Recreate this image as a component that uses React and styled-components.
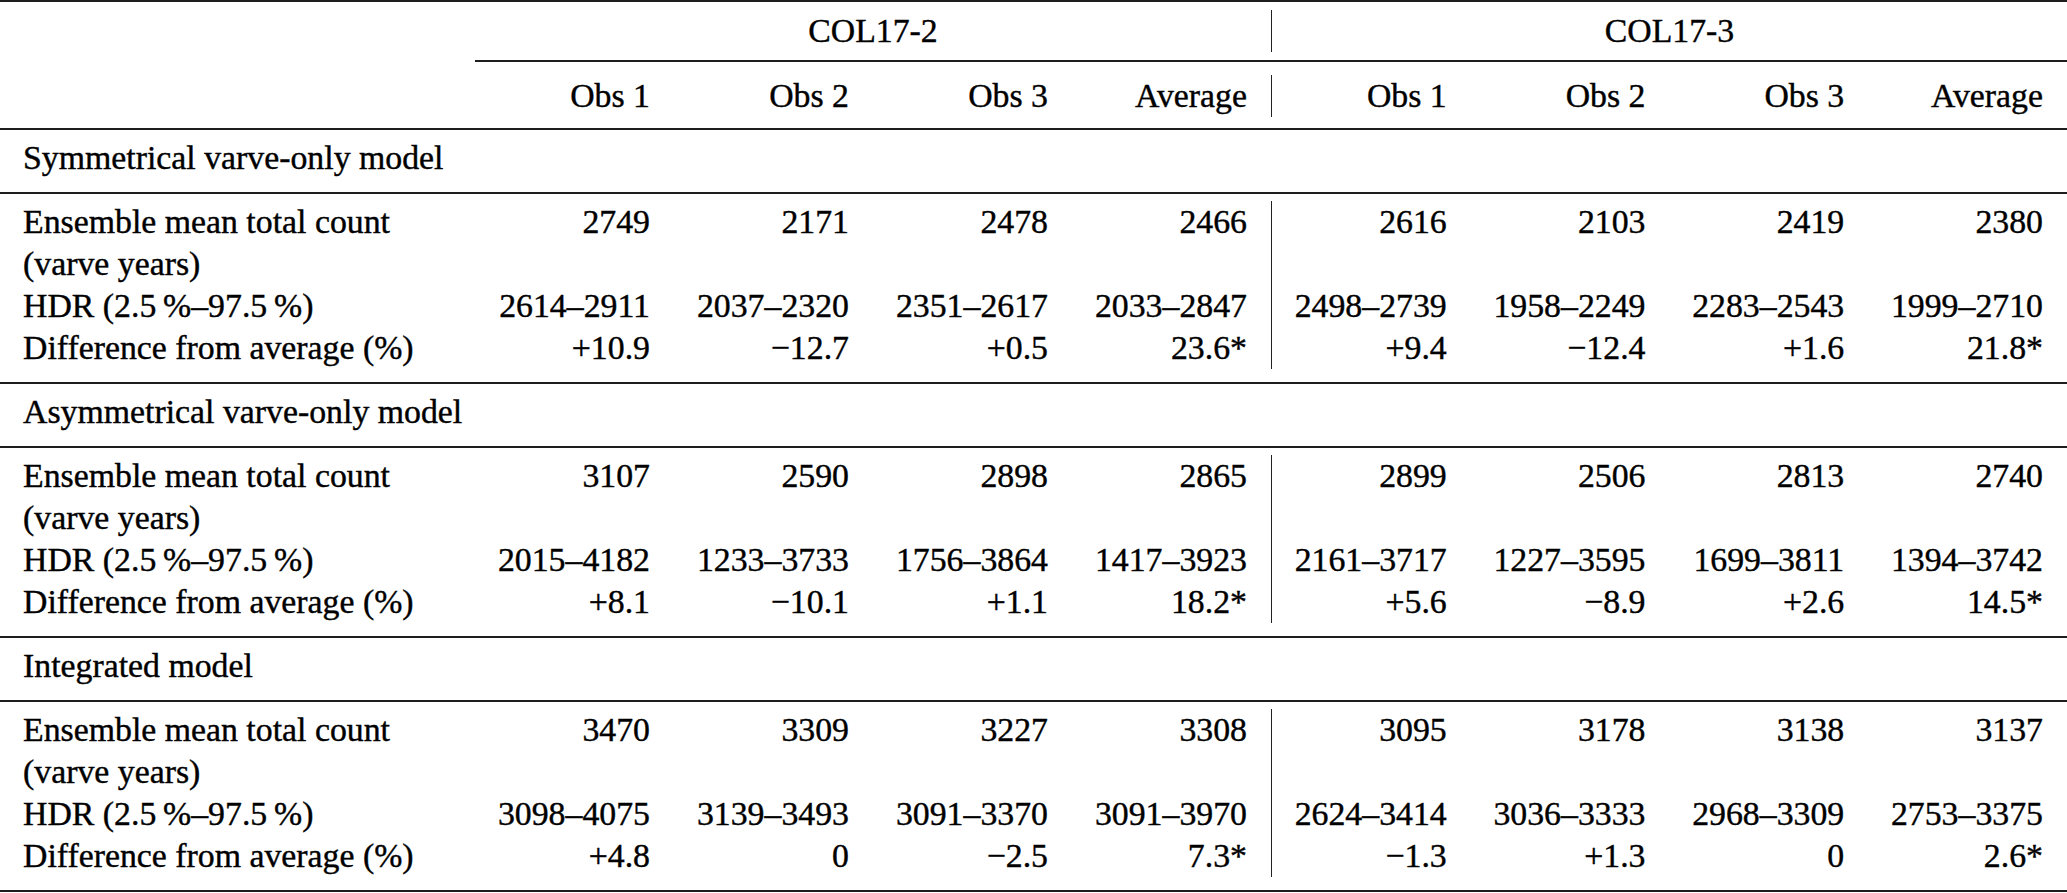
import React, { Fragment } from 'react';
import styled, { createGlobalStyle } from 'styled-components';

const rule = '2px solid #1e1e1e';

const GlobalStyle = createGlobalStyle`
  body {
    margin: 0;
    background: #fff;
  }
`;

const Table = styled.div`
  width: 100%;
  font-family: "Liberation Serif", "Times New Roman", serif;
  font-size: 33.8px;
  line-height: 42px;
  color: #000;
  -webkit-text-stroke: 0.4px #000;
  border-top: ${rule};
`;

const Row = styled.div`
  display: grid;
  grid-template-columns: 475px 1fr 1fr;
  padding: ${p => p.$pad || '0'};
  border-bottom: ${p => (p.$ruled ? rule : 'none')};
`;

const Label = styled.div`
  padding-left: 23px;
  white-space: nowrap;
`;

const Spanner = styled.div`
  grid-column: 2 / 4;
  display: grid;
  grid-template-columns: 1fr 1fr;
  padding: 8px 0;
  border-bottom: ${rule};
`;

const SpanCell = styled.div`
  text-align: center;
  border-left: ${p => (p.$divided ? '1px solid #222' : 'none')};
`;

const Group = styled.div`
  display: grid;
  grid-template-columns: repeat(4, 1fr);
  border-left: ${p => (p.$divided ? '1px solid #222' : 'none')};
`;

const Cell = styled.div`
  text-align: right;
  padding-right: 24px;
  white-space: nowrap;
`;

const SectionTitle = styled.div`
  padding: 7px 23px 13px;
  border-bottom: ${rule};
`;

const Section = styled.div`
  padding: 7px 0 13px;
  border-bottom: ${rule};
`;

const heads = ['Obs 1', 'Obs 2', 'Obs 3', 'Average'];

const models = [
  {
    title: 'Symmetrical varve-only model',
    mean: [['2749', '2171', '2478', '2466'], ['2616', '2103', '2419', '2380']],
    hdr: [['2614–2911', '2037–2320', '2351–2617', '2033–2847'], ['2498–2739', '1958–2249', '2283–2543', '1999–2710']],
    diff: [['+10.9', '−12.7', '+0.5', '23.6*'], ['+9.4', '−12.4', '+1.6', '21.8*']],
  },
  {
    title: 'Asymmetrical varve-only model',
    mean: [['3107', '2590', '2898', '2865'], ['2899', '2506', '2813', '2740']],
    hdr: [['2015–4182', '1233–3733', '1756–3864', '1417–3923'], ['2161–3717', '1227–3595', '1699–3811', '1394–3742']],
    diff: [['+8.1', '−10.1', '+1.1', '18.2*'], ['+5.6', '−8.9', '+2.6', '14.5*']],
  },
  {
    title: 'Integrated model',
    mean: [['3470', '3309', '3227', '3308'], ['3095', '3178', '3138', '3137']],
    hdr: [['3098–4075', '3139–3493', '3091–3370', '3091–3970'], ['2624–3414', '3036–3333', '2968–3309', '2753–3375']],
    diff: [['+4.8', '0', '−2.5', '7.3*'], ['−1.3', '+1.3', '0', '2.6*']],
  },
];

const Values = ({ pair }) => (
  <Fragment>
    <Group>
      {pair[0].map((v, i) => <Cell key={i}>{v}</Cell>)}
    </Group>
    <Group $divided>
      {pair[1].map((v, i) => <Cell key={i}>{v}</Cell>)}
    </Group>
  </Fragment>
);

const App = () => (
  <Fragment>
    <GlobalStyle />
    <Table>
      <Row>
        <Label />
        <Spanner>
          <SpanCell>COL17-2</SpanCell>
          <SpanCell $divided>COL17-3</SpanCell>
        </Spanner>
      </Row>
      <Row $pad="13px 0 11px" $ruled>
        <Label />
        <Values pair={[heads, heads]} />
      </Row>

      {models.map(model => (
        <Fragment key={model.title}>
          <SectionTitle>{model.title}</SectionTitle>
          <Section>
            <Row>
              <Label>Ensemble mean total count<br />(varve years)</Label>
              <Values pair={model.mean} />
            </Row>
            <Row>
              <Label>HDR (2.5&#8201;%–97.5&#8201;%)</Label>
              <Values pair={model.hdr} />
            </Row>
            <Row>
              <Label>Difference from average (%)</Label>
              <Values pair={model.diff} />
            </Row>
          </Section>
        </Fragment>
      ))}
    </Table>
  </Fragment>
);

export default App;
